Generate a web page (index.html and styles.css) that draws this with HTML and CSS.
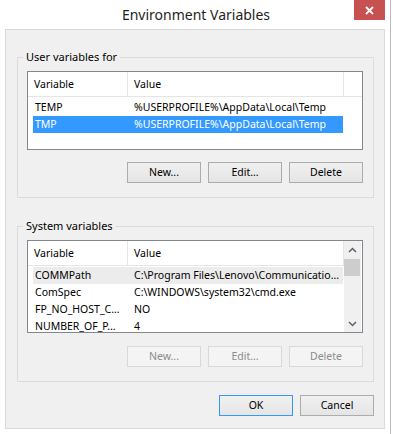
FILE: index.html
```html
<!DOCTYPE html>
<html>
<head>
<meta charset="utf-8">
<title>Environment Variables</title>
<link rel="stylesheet" href="styles.css">
</head>
<body>
<div class="window">
  <div class="titlebar">
    <span class="title">Environment Variables</span>
    <div class="close">
      <svg width="9" height="9" viewBox="0 0 9 9"><path d="M1 1L8 8M8 1L1 8" stroke="#fff" stroke-width="1.8" fill="none"/></svg>
    </div>
  </div>
  <div class="client">
    <div class="group">
      <div class="group-title">User variables for</div>
      <div class="list list-user">
        <div class="lv-head">
          <div class="hc hc1">Variable</div>
          <div class="hc hc2">Value</div>
        </div>
        <div class="lv-rows">
          <div class="row"><span class="c1">TEMP</span><span class="c2">%USERPROFILE%\AppData\Local\Temp</span></div>
          <div class="row sel"><span class="c1">TMP</span><span class="c2">%USERPROFILE%\AppData\Local\Temp</span></div>
        </div>
      </div>
      <div class="btn-row">
        <button class="btn">New...</button>
        <button class="btn">Edit...</button>
        <button class="btn">Delete</button>
      </div>
    </div>
    <div class="group group-sys">
      <div class="group-title">System variables</div>
      <div class="list list-sys">
        <div class="lv-main">
          <div class="lv-head">
            <div class="hc hc1">Variable</div>
            <div class="hc hc2">Value</div>
          </div>
          <div class="lv-rows lv-rows-sys">
            <div class="row hover"><span class="c1">COMMPath</span><span class="c2">C:\Program Files\Lenovo\Communicatio…</span></div>
            <div class="row"><span class="c1">ComSpec</span><span class="c2">C:\WINDOWS\system32\cmd.exe</span></div>
            <div class="row"><span class="c1">FP_NO_HOST_C…</span><span class="c2">NO</span></div>
            <div class="row"><span class="c1">NUMBER_OF_P…</span><span class="c2">4</span></div>
          </div>
        </div>
        <div class="scrollbar">
          <div class="sb-btn"><svg width="9" height="6" viewBox="0 0 9 6"><path d="M1 5L4.5 1.5L8 5" stroke="#606060" stroke-width="1.5" fill="none"/></svg></div>
          <div class="sb-thumb"></div>
          <div class="sb-track"></div>
          <div class="sb-btn"><svg width="9" height="6" viewBox="0 0 9 6"><path d="M1 1L4.5 4.5L8 1" stroke="#606060" stroke-width="1.5" fill="none"/></svg></div>
        </div>
      </div>
      <div class="btn-row btn-row-sys">
        <button class="btn" disabled>New...</button>
        <button class="btn" disabled>Edit...</button>
        <button class="btn" disabled>Delete</button>
      </div>
    </div>
    <div class="btn-row dialog-btns">
      <button class="btn btn-default">OK</button>
      <button class="btn">Cancel</button>
    </div>
  </div>
</div>
</body>
</html>
```

FILE: styles.css
```css
html, body {
  margin: 0;
  padding: 0;
  background: #ffffff;
}

body {
  font-family: "Noto Sans", "Liberation Sans", sans-serif;
  font-size: 10.5px;
  color: #000;
}

.window {
  width: 391px;
  height: 434px;
  box-sizing: border-box;
  border-right: 1px solid #b9b9b9;
  display: flex;
  flex-direction: column;
  position: relative;
}

.titlebar {
  height: 29px;
  display: flex;
  align-items: center;
  justify-content: center;
  position: relative;
}

.title {
  font-size: 14px;
  line-height: 20px;
  color: #1e1e1e;
  margin-left: 2px;
}

.close {
  position: absolute;
  top: 0;
  right: 5px;
  width: 31px;
  height: 20px;
  background: #c75050;
  display: flex;
  align-items: center;
  justify-content: center;
}

.client {
  margin-left: 5px;
  width: 380px;
  height: 400px;
  box-sizing: border-box;
  border: 1px solid #d9d9d9;
  background: #f0f0f0;
  padding: 27px 10px 0 11px;
  display: flex;
  flex-direction: column;
}

.group {
  border: 1px solid #dcdcdc;
  padding: 0 10px 14px 9px;
}

.group-sys {
  margin-top: 28px;
}

.group-title {
  margin: -9px 0 0 -4px;
  padding: 0 3px;
  width: fit-content;
  line-height: 16px;
  font-size: 11px;
  background: #f0f0f0;
}

.list {
  margin-top: 6px;
  box-sizing: border-box;
  border: 1px solid #828790;
  background: #fff;
  overflow: hidden;
}

.list-user {
  height: 79px;
}

.list-sys {
  height: 93px;
  display: flex;
}

.lv-main {
  width: 316px;
  overflow: hidden;
}

.lv-head {
  display: flex;
  height: 24px;
  border-bottom: 1px solid #e5e5e5;
}

.hc {
  box-sizing: border-box;
  border-right: 1px solid #e5e5e5;
  padding-left: 6px;
  line-height: 24px;
  white-space: nowrap;
}

.hc1 {
  width: 100px;
}

.hc2 {
  width: 216px;
}

.lv-rows {
  padding-top: 2px;
}

.lv-rows-sys {
  padding-top: 1px;
}

.row {
  display: grid;
  grid-template-columns: 94px 216px;
  width: 310px;
  height: 17px;
  line-height: 17px;
  margin-left: 5px;
  white-space: nowrap;
}

.row.sel {
  background: #3399ff;
  color: #fff;
}

.row.hover {
  background: #ececec;
}

.c1 {
  padding-left: 2px;
  overflow: hidden;
}

.c2 {
  padding-left: 7px;
  overflow: hidden;
}

.scrollbar {
  width: 17px;
  background: #f0f0f0;
  display: flex;
  flex-direction: column;
}

.sb-btn {
  height: 17px;
  display: flex;
  align-items: center;
  justify-content: center;
}

.sb-thumb {
  margin: 1px 1px 0 0;
  height: 17px;
  background: #cdcdcd;
}

.sb-track {
  flex: 1;
}

.btn-row {
  display: flex;
  justify-content: flex-end;
  gap: 7px;
  margin-top: 12px;
}

.btn-row-sys {
  margin-top: 13px;
}

.dialog-btns {
  margin-top: 13px;
}

.btn {
  width: 74px;
  height: 21px;
  box-sizing: border-box;
  border: 1px solid #acacac;
  background: linear-gradient(#f0f0f0, #e5e5e5);
  font-family: inherit;
  font-size: 10.5px;
  color: #000;
  padding: 0;
  margin: 0;
  line-height: 19px;
}

.btn:disabled {
  border-color: #d9d9d9;
  background: #f4f4f4;
  color: #8b8b8b;
}

.btn-default {
  border-color: #3399ff;
}
```
